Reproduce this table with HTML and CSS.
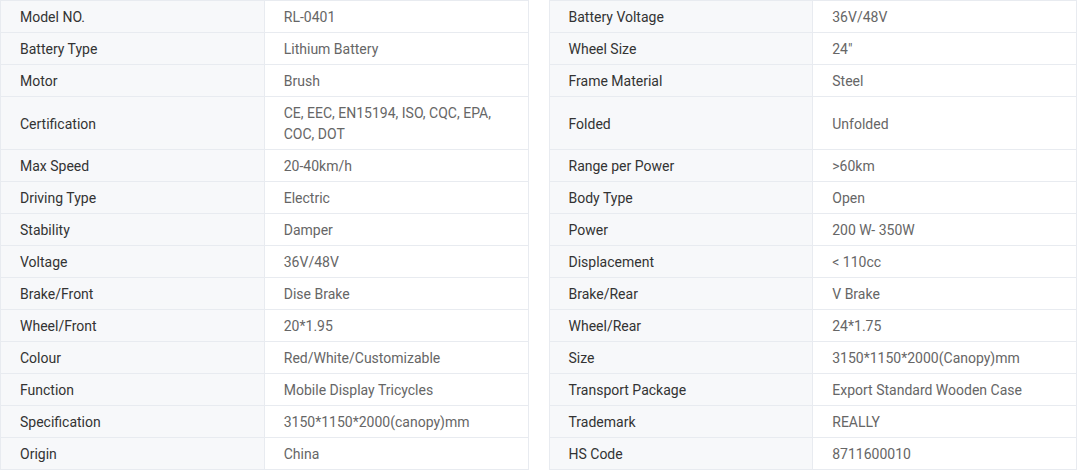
FILE: index.html
```html
<!DOCTYPE html>
<html lang="en">
<head>
<meta charset="utf-8">
<title>Specifications</title>
<link rel="stylesheet" href="styles.css">
</head>
<body>
<div class="specs">
  <table class="spec-table">
    <colgroup><col class="col-label"><col class="col-value"></colgroup>
    <tbody>
      <tr><th>Model NO.</th><td>RL-0401</td></tr>
      <tr><th>Battery Type</th><td>Lithium Battery</td></tr>
      <tr><th>Motor</th><td>Brush</td></tr>
      <tr><th>Certification</th><td>CE, EEC, EN15194, ISO, CQC, EPA, COC, DOT</td></tr>
      <tr><th>Max Speed</th><td>20-40km/h</td></tr>
      <tr><th>Driving Type</th><td>Electric</td></tr>
      <tr><th>Stability</th><td>Damper</td></tr>
      <tr><th>Voltage</th><td>36V/48V</td></tr>
      <tr><th>Brake/Front</th><td>Dise Brake</td></tr>
      <tr><th>Wheel/Front</th><td>20*1.95</td></tr>
      <tr><th>Colour</th><td>Red/White/Customizable</td></tr>
      <tr><th>Function</th><td>Mobile Display Tricycles</td></tr>
      <tr><th>Specification</th><td>3150*1150*2000(canopy)mm</td></tr>
      <tr><th>Origin</th><td>China</td></tr>
    </tbody>
  </table>
  <table class="spec-table">
    <colgroup><col class="col-label"><col class="col-value"></colgroup>
    <tbody>
      <tr><th>Battery Voltage</th><td>36V/48V</td></tr>
      <tr><th>Wheel Size</th><td>24"</td></tr>
      <tr><th>Frame Material</th><td>Steel</td></tr>
      <tr class="tall"><th>Folded</th><td>Unfolded</td></tr>
      <tr><th>Range per Power</th><td>&gt;60km</td></tr>
      <tr><th>Body Type</th><td>Open</td></tr>
      <tr><th>Power</th><td>200 W- 350W</td></tr>
      <tr><th>Displacement</th><td>&lt; 110cc</td></tr>
      <tr><th>Brake/Rear</th><td>V Brake</td></tr>
      <tr><th>Wheel/Rear</th><td>24*1.75</td></tr>
      <tr><th>Size</th><td>3150*1150*2000(Canopy)mm</td></tr>
      <tr><th>Transport Package</th><td>Export Standard Wooden Case</td></tr>
      <tr><th>Trademark</th><td>REALLY</td></tr>
      <tr><th>HS Code</th><td>8711600010</td></tr>
    </tbody>
  </table>
</div>
</body>
</html>
```

FILE: styles.css
```css
html, body {
  margin: 0;
  padding: 0;
  background: #ffffff;
}

body {
  font-family: Roboto, "Liberation Sans", Arial, sans-serif;
  font-size: 14px;
}

.specs {
  display: flex;
  gap: 20px;
  width: 1077px;
  align-items: flex-start;
}

.spec-table {
  flex: 1 1 0;
  width: 528px;
  border-collapse: collapse;
  table-layout: fixed;
  border: 1px solid #e8ebf0;
}

.col-label,
.col-value {
  width: 50%;
}

.spec-table th,
.spec-table td {
  border: 1px solid #e8ebf0;
  padding: 6px 20px 4px 19px;
  line-height: 21px;
  text-align: left;
  vertical-align: middle;
  font-weight: 400;
}

.spec-table th {
  background: #f7f8fa;
  color: #333333;
}

.spec-table td {
  background: #ffffff;
  color: #666666;
}

.spec-table .tall th,
.spec-table .tall td {
  height: 42px;
}
```
